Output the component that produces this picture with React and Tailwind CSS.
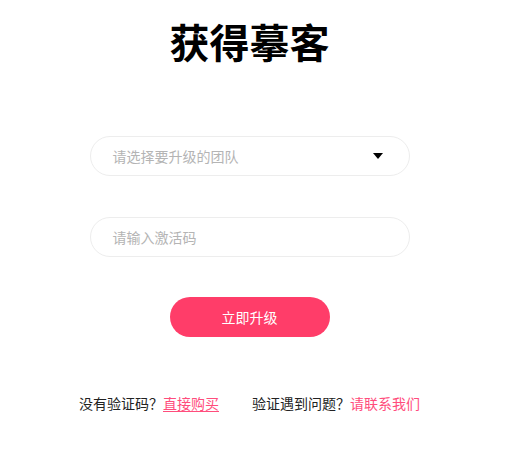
import React from 'react';

export default function App() {
  return (
    <div
      className="w-[506px] h-[454px] bg-white"
      style={{ fontFamily: '"Noto Sans CJK SC", "Noto Sans", sans-serif' }}
    >
      <div className="w-[499px] flex flex-col items-center">
        <h1 className="mt-[21px] text-[40px] leading-[40px] font-bold text-black">获得摹客</h1>

        {/* 团队选择 */}
        <div className="mt-[75px] w-[320px] h-[40px] rounded-full border border-[#ededed] flex items-center justify-between pl-[22px] pr-[26px]">
          <span className="text-[14px] text-[#b4b4b4]">请选择要升级的团队</span>
          <span className="w-0 h-0 border-l-[5px] border-r-[5px] border-t-[6px] border-l-transparent border-r-transparent border-t-black"></span>
        </div>

        <div className="mt-[41px] w-[320px] h-[40px] rounded-full border border-[#ededed] flex items-center pl-[22px]">
          <span className="text-[14px] text-[#b4b4b4]">请输入激活码</span>
        </div>

        <button className="mt-[40px] w-[160px] h-[40px] rounded-full bg-[#ff3d69] text-white text-[14px]">
          立即升级
        </button>

        <div className="mt-[56px] flex items-center text-[14px] leading-[20px] text-[#222]">
          <span>
            没有验证码？<a className="text-[#ff4d7c] underline underline-offset-2">直接购买</a>
          </span>
          <span className="ml-[33px]">
            验证遇到问题？<a className="text-[#ff4d7c]">请联系我们</a>
          </span>
        </div>
      </div>
    </div>
  );
}
